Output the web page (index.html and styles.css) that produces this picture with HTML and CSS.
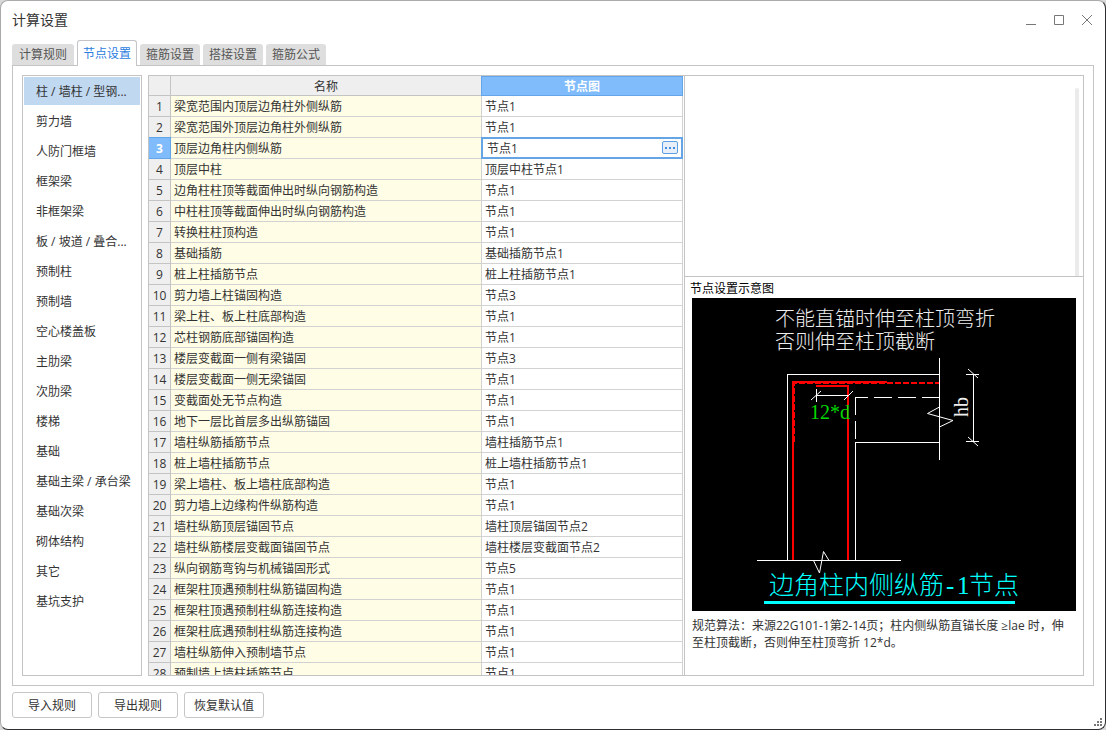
FILE: index.html
```html
<!DOCTYPE html>
<html lang="zh-CN">
<head>
<meta charset="utf-8">
<title>计算设置</title>
<link rel="stylesheet" href="styles.css">
</head>
<body>
<main class="window">
  <header class="titlebar">
    <h1 class="title">计算设置</h1>
    <div class="window-controls">
      <button type="button" class="control" aria-label="最小化"><svg width="12" height="12" viewBox="0 0 12 12"><path d="M1 10.5h10"/></svg></button>
      <button type="button" class="control" aria-label="最大化"><svg width="12" height="12" viewBox="0 0 12 12"><path d="M1.500 1.500h9v9h-9z"/></svg></button>
      <button type="button" class="control" aria-label="关闭"><svg width="12" height="12" viewBox="0 0 12 12"><path d="M1 1l10 10M11 1L1 11"/></svg></button>
    </div>
  </header>

  <nav class="tabs" role="tablist">
    <button type="button" role="tab" class="tab">计算规则</button>
    <button type="button" role="tab" class="tab tab-active" aria-selected="true">节点设置</button>
    <button type="button" role="tab" class="tab">箍筋设置</button>
    <button type="button" role="tab" class="tab">搭接设置</button>
    <button type="button" role="tab" class="tab">箍筋公式</button>
  </nav>

  <section class="panel">
    <div class="categories">
      <button type="button" class="category category-active">柱 / 墙柱 / 型钢...</button>
      <button type="button" class="category">剪力墙</button>
      <button type="button" class="category">人防门框墙</button>
      <button type="button" class="category">框架梁</button>
      <button type="button" class="category">非框架梁</button>
      <button type="button" class="category">板 / 坡道 / 叠合...</button>
      <button type="button" class="category">预制柱</button>
      <button type="button" class="category">预制墙</button>
      <button type="button" class="category">空心楼盖板</button>
      <button type="button" class="category">主肋梁</button>
      <button type="button" class="category">次肋梁</button>
      <button type="button" class="category">楼梯</button>
      <button type="button" class="category">基础</button>
      <button type="button" class="category">基础主梁 / 承台梁</button>
      <button type="button" class="category">基础次梁</button>
      <button type="button" class="category">砌体结构</button>
      <button type="button" class="category">其它</button>
      <button type="button" class="category">基坑支护</button>
    </div>

    <div class="workspace">
      <div class="table-pane">
        <table class="grid">
          <colgroup><col class="col-index"><col><col class="col-value"></colgroup>
          <thead>
            <tr><th></th><th>名称</th><th class="head-active">节点图</th></tr>
          </thead>
          <tbody>
            <tr><th>1</th><td class="name">梁宽范围内顶层边角柱外侧纵筋</td><td>节点1</td></tr>
            <tr><th>2</th><td class="name">梁宽范围外顶层边角柱外侧纵筋</td><td>节点1</td></tr>
            <tr><th class="head-active">3</th><td class="name">顶层边角柱内侧纵筋</td><td class="editing"><div class="editor"><input type="text" class="editor-input" value="节点1" aria-label="顶层边角柱内侧纵筋"><button type="button" class="more" aria-label="更多"><svg width="10" height="2" viewBox="0 0 10 2"><path d="M0 0h2v2h-2zM4 0h2v2h-2zM8 0h2v2h-2z"/></svg></button></div></td></tr>
            <tr><th>4</th><td class="name">顶层中柱</td><td>顶层中柱节点1</td></tr>
            <tr><th>5</th><td class="name">边角柱柱顶等截面伸出时纵向钢筋构造</td><td>节点1</td></tr>
            <tr><th>6</th><td class="name">中柱柱顶等截面伸出时纵向钢筋构造</td><td>节点1</td></tr>
            <tr><th>7</th><td class="name">转换柱柱顶构造</td><td>节点1</td></tr>
            <tr><th>8</th><td class="name">基础插筋</td><td>基础插筋节点1</td></tr>
            <tr><th>9</th><td class="name">桩上柱插筋节点</td><td>桩上柱插筋节点1</td></tr>
            <tr><th>10</th><td class="name">剪力墙上柱锚固构造</td><td>节点3</td></tr>
            <tr><th>11</th><td class="name">梁上柱、板上柱底部构造</td><td>节点1</td></tr>
            <tr><th>12</th><td class="name">芯柱钢筋底部锚固构造</td><td>节点1</td></tr>
            <tr><th>13</th><td class="name">楼层变截面一侧有梁锚固</td><td>节点3</td></tr>
            <tr><th>14</th><td class="name">楼层变截面一侧无梁锚固</td><td>节点1</td></tr>
            <tr><th>15</th><td class="name">变截面处无节点构造</td><td>节点1</td></tr>
            <tr><th>16</th><td class="name">地下一层比首层多出纵筋锚固</td><td>节点1</td></tr>
            <tr><th>17</th><td class="name">墙柱纵筋插筋节点</td><td>墙柱插筋节点1</td></tr>
            <tr><th>18</th><td class="name">桩上墙柱插筋节点</td><td>桩上墙柱插筋节点1</td></tr>
            <tr><th>19</th><td class="name">梁上墙柱、板上墙柱底部构造</td><td>节点1</td></tr>
            <tr><th>20</th><td class="name">剪力墙上边缘构件纵筋构造</td><td>节点1</td></tr>
            <tr><th>21</th><td class="name">墙柱纵筋顶层锚固节点</td><td>墙柱顶层锚固节点2</td></tr>
            <tr><th>22</th><td class="name">墙柱纵筋楼层变截面锚固节点</td><td>墙柱楼层变截面节点2</td></tr>
            <tr><th>23</th><td class="name">纵向钢筋弯钩与机械锚固形式</td><td>节点5</td></tr>
            <tr><th>24</th><td class="name">框架柱顶遇预制柱纵筋锚固构造</td><td>节点1</td></tr>
            <tr><th>25</th><td class="name">框架柱顶遇预制柱纵筋连接构造</td><td>节点1</td></tr>
            <tr><th>26</th><td class="name">框架柱底遇预制柱纵筋连接构造</td><td>节点1</td></tr>
            <tr><th>27</th><td class="name">墙柱纵筋伸入预制墙节点</td><td>节点1</td></tr>
            <tr><th>28</th><td class="name">预制墙上墙柱插筋节点</td><td>节点1</td></tr>
          </tbody>
        </table>
      </div>

      <div class="side-pane">
        <div class="side-top"><div class="scrollbar"></div></div>
        <div class="preview">
          <h2 class="preview-title">节点设置示意图</h2>
          <svg class="diagram" viewBox="0 0 384 313" role="img" aria-label="边角柱内侧纵筋-1节点">
            <rect width="384" height="313" fill="#000"/>
            <g class="note">
              <text x="83" y="28">不能直锚时伸至柱顶弯折</text>
              <text x="83" y="51">否则伸至柱顶截断</text>
            </g>
            <g class="outline">
              <path d="M95.500 262V76.500H247M247.500 60v102M163.500 262V144.500H247M65 262.500H209"/>
              <path d="M163.500 117V99.500H176M182 99.500h18M206 99.500h18M230 99.500h17M163.500 123v18"/>
            </g>
            <g class="rebar">
              <path d="M101 262V84H195M124 88H156V262"/>
              <path stroke-dasharray="6 2" d="M102 144V85H247"/>
            </g>
            <g class="outline smooth">
              <path d="M247.500 109L235.500 115.500L261 122.500L247.500 129M121.500 262.500L127.500 275L131.500 253.500L137 262.500"/>
              <path d="M119 102l10-9M152 102l9-9M276 71l10 9M276 139l10 9"/>
            </g>
            <path class="outline" d="M124.500 91v13M124 97.500h33M281.500 76v68M274 76.500h13M274 143.500h13"/>
            <text class="anchor-length" x="118" y="121">12*d</text>
            <text class="beam-height" transform="translate(276 119) rotate(-90)">hb</text>
            <g class="caption">
              <text x="77" y="296">边角柱内侧纵筋</text>
              <text x="254" y="296">-</text>
              <text x="265" y="296">1</text>
              <text x="277" y="296">节点</text>
            </g>
            <rect x="72" y="303" width="251" height="3" fill="#0ff"/>
          </svg>
          <p class="description">规范算法：来源22G101-1第2-14页；柱内侧纵筋直锚长度 ≥lae 时，伸至柱顶截断，否则伸至柱顶弯折 12*d。</p>
        </div>
      </div>
    </div>
  </section>

  <footer class="actions">
    <button type="button" class="action">导入规则</button>
    <button type="button" class="action">导出规则</button>
    <button type="button" class="action">恢复默认值</button>
    <svg class="grip" width="8" height="8" viewBox="0 0 8 8"><path d="M6 0h2v2h-2zM3 3h2v2h-2zM6 3h2v2h-2zM0 6h2v2h-2zM3 6h2v2h-2zM6 6h2v2h-2z"/></svg>
  </footer>
</main>
</body>
</html>
```
FILE: styles.css
```css
* { box-sizing: border-box; }

body {
  margin: 0;
  background: #d8d8d8;
  color: #333;
  font: 12px/20px "Open Sans", "Noto Sans CJK SC", sans-serif;
}

button, input { font: inherit; color: inherit; }
button { padding: 0; cursor: pointer; }

.window {
  display: flex;
  flex-direction: column;
  height: 100vh;
  padding: 0 11px 11px;
  background: #fff;
  border: 1px solid #aaa;
  border-right-color: #2b2d30;
  border-bottom-color: #2b2d30;
  border-radius: 8px;
}

/* Title bar */
.titlebar {
  display: flex;
  align-items: center;
  justify-content: space-between;
  height: 39px;
  padding: 0 1px 2px 0;
}
.title { margin: 0; font-size: 14px; font-weight: 400; }
.window-controls { display: flex; gap: 16px; }
.control {
  display: flex;
  width: 12px;
  height: 12px;
  border: 0;
  background: none;
}
.control svg { fill: none; stroke: #777; }

/* Tabs */
.tabs {
  display: flex;
  align-items: flex-end;
  gap: 3px;
  height: 26px;
  margin-bottom: -1px;
  position: relative;
}
.tab {
  height: 21px;
  padding: 0 6px;
  margin-bottom: 1px;
  border: 0;
  border-radius: 3px 3px 0 0;
  background: #dedede;
  color: #555;
}
.tab:first-child { padding: 0 7px; }
.tab-active {
  height: 26px;
  margin-bottom: 0;
  padding: 0 5px;
  border: 1px solid #c4c4c8;
  border-bottom: 0;
  background: #fff;
  color: #2a7ddf;
}

/* Main panel */
.panel {
  display: grid;
  grid-template-columns: 120px minmax(0, 1fr);
  gap: 6px;
  flex: 1;
  min-height: 0;
  padding: 9px;
  border: 1px solid #c4c4c4;
}
.categories {
  display: flex;
  flex-direction: column;
  gap: 2px;
  padding: 1px;
  border: 1px solid #c4c4c4;
}
.category {
  height: 28px;
  padding: 2px 0 0 12px;
  border: 0;
  background: none;
  text-align: left;
  white-space: pre;
}
.category-active { background: #c1d8f1; }

.workspace {
  display: grid;
  grid-template-columns: minmax(0, 1fr) 399px;
  min-height: 0;
  border: 1px solid #c4c4c4;
}

/* Table */
.table-pane { overflow: hidden; padding-right: 1px; }
.grid {
  width: 100%;
  table-layout: fixed;
  border-collapse: separate;
  border-spacing: 0;
}
.col-index { width: 22px; }
.col-value { width: 201px; }
.grid th, .grid td {
  height: 21px;
  padding: 2px 3px 0;
  border: solid #d2d2d2;
  border-width: 0 1px 1px 0;
  font-weight: 400;
  line-height: 18px;
  text-align: left;
  white-space: nowrap;
}
.grid th {
  padding: 2px 0 0;
  border-color: #c4c4c4;
  background: #efefef;
  text-align: center;
}
.grid thead th { height: 20px; line-height: 17px; }
.grid .name { background: #fffde6; }
.grid .head-active {
  border-color: #62a5e8;
  background: #80bbfb;
  color: #fff;
  font-weight: 700;
}
.grid thead .head-active { box-shadow: inset 0 1px 0 #62a5e8, -1px 0 0 #62a5e8; }
.grid tbody .head-active { box-shadow: 0 -1px 0 #62a5e8; }

.grid .editing { position: relative; }
.editor {
  position: absolute;
  inset: -1px;
  display: flex;
  align-items: flex-start;
  padding: 0 3px 0 4px;
  border: 2px solid #65a4e5;
  background: #fff;
}
.editor-input {
  flex: 1;
  min-width: 0;
  height: 18px;
  padding: 1px 0 0;
  border: 0;
  outline: 0;
  background: none;
}
.more {
  display: flex;
  align-items: center;
  justify-content: center;
  width: 16px;
  height: 13px;
  margin-top: 2px;
  border: 1px solid #5aa0e4;
  border-radius: 2px;
  background: #e9eff8;
}
.more svg { fill: #3f8de0; }

/* Preview side */
.side-pane {
  display: flex;
  flex-direction: column;
  border-left: 1px solid #c4c4c4;
}
.side-top {
  display: flex;
  justify-content: flex-end;
  height: 200px;
  padding: 12px 4px 0 0;
}
.scrollbar {
  width: 4px;
  border-radius: 2px 2px 0 0;
  background: #ebebeb;
}
.preview {
  flex: 1;
  padding: 4px 7px 0;
  border-top: 1px solid #c4c4c4;
}
.preview-title {
  margin: 0 0 0 -2px;
  padding-bottom: 1px;
  color: #000;
  font-size: 12px;
  font-weight: 400;
  line-height: 16px;
}
.diagram { display: block; width: 100%; }
.description { margin: 6px 0 0; padding-right: 6px; line-height: 17px; }

.diagram text { font-family: "Liberation Serif", "Noto Sans CJK SC", serif; font-weight: 300; }
.note { fill: #eee; font-size: 20px; }
.outline { fill: none; stroke: #fff; shape-rendering: crispEdges; }
.smooth { shape-rendering: auto; }
.rebar { fill: none; stroke: #f00; stroke-width: 2px; shape-rendering: crispEdges; }
.anchor-length { fill: #00d800; font-size: 20px; }
.beam-height { fill: #eee; font-size: 20px; }
.caption { fill: #0ff; font-size: 25px; }

/* Bottom buttons */
.actions {
  display: flex;
  gap: 6px;
  padding-top: 6px;
}
.action {
  width: 80px;
  height: 26px;
  padding-top: 2px;
  border: 1px solid #c6c6c6;
  border-radius: 3px;
  background: #fff;
}
.grip {
  margin: 0 -8px -8px auto;
  align-self: flex-end;
  fill: #777;
}
```
